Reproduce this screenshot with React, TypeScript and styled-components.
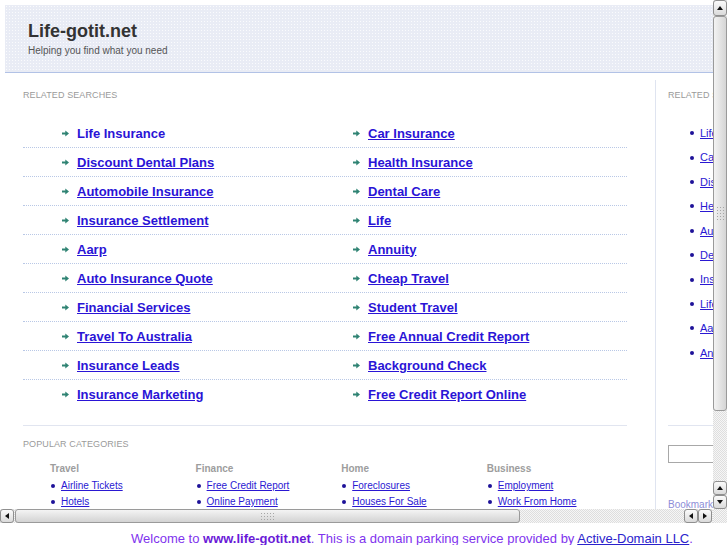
import React from 'react';
import styled, { createGlobalStyle } from 'styled-components';

const GlobalStyle = createGlobalStyle`
  body {
    margin: 0;
    background: #fff;
    font-family: "Liberation Sans", Arial, sans-serif;
  }
`;

const checker = `
  background-color: #f6f6f6;
  background-image: repeating-conic-gradient(#dedede 0 25%, #f6f6f6 0 50%);
  background-size: 2px 2px;
`;

const Frame = styled.div`
  display: grid;
  grid-template-columns: 713px 14px;
  grid-template-rows: 509px 14px;
  height: 523px;
`;

const Viewport = styled.div`
  overflow: hidden;
  padding: 5px 0 0 5px;
  box-sizing: border-box;
`;

const Page = styled.div`
  width: 900px;
`;

const Header = styled.header`
  height: 52px;
  padding: 15px 23px 0;
  border-bottom: 1px solid #b2c2e6;
  background-color: #e9ecf5;
  background-image: radial-gradient(#fafbfd 0.7px, transparent 0.8px);
  background-size: 3px 3px;
`;

const Title = styled.h1`
  margin: 0;
  font-size: 18px;
  line-height: 22px;
  font-weight: bold;
  color: #333;
`;

const Tagline = styled.div`
  margin-top: 2px;
  font-size: 10px;
  line-height: 14px;
  color: #555;
`;

const Columns = styled.div`
  display: flex;
  margin-top: 7px;
`;

const Main = styled.main`
  width: 604px;
  padding: 10px 28px 0 18px;
`;

const Sidebar = styled.aside`
  width: 200px;
  border-left: 1px solid #dfe4f0;
  padding: 10px 0 0 12px;
`;

const SectionLabel = styled.div`
  font-size: 9px;
  line-height: 11px;
  letter-spacing: 0.1px;
  text-transform: uppercase;
  color: #9a9a9a;
  white-space: nowrap;
`;

const LinkList = styled.div`
  margin-top: 18px;
`;

const LinkRow = styled.div`
  display: grid;
  grid-template-columns: 291px 1fr;
  height: 28px;
  border-bottom: 1px dotted #b9c8e6;

  &:last-child {
    border-bottom: 1px solid transparent;
  }
`;

const LinkCell = styled.div`
  display: flex;
  align-items: center;
  padding-left: 39px;
`;

const Arrow = styled.svg`
  width: 7px;
  height: 7px;
  margin-right: 8px;
  flex: none;
`;

const BigLink = styled.a<{ plain?: boolean }>`
  font-size: 13px;
  font-weight: bold;
  color: #2a14d6;
  text-decoration: ${p => (p.plain ? 'none' : 'underline')};
  white-space: nowrap;
`;

const Categories = styled.section`
  margin-top: 16px;
  border-top: 1px solid #e1e5f0;
  padding-top: 13px;
`;

const CategoryGrid = styled.div`
  display: grid;
  grid-template-columns: repeat(4, 145.6px);
  margin-top: 12px;
  padding-left: 27px;
`;

const CategoryTitle = styled.div`
  font-size: 10px;
  line-height: 14px;
  font-weight: bold;
  color: #9d9d9d;
`;

const SmallList = styled.ul<{ row: number }>`
  list-style: none;
  margin: ${p => (p.row === 16 ? '2px 0 0' : '20px 0 0')};
  padding: 0;

  li {
    display: flex;
    align-items: center;
    line-height: ${p => p.row}px;
    padding-left: ${p => (p.row === 16 ? 1 : 22)}px;
  }
`;

const Dot = styled.span<{ gap: number }>`
  width: 4px;
  height: 4px;
  border-radius: 50%;
  background: #1e1299;
  margin-right: ${p => p.gap}px;
  flex: none;
`;

const SmallLink = styled.a<{ size: number }>`
  font-size: ${p => p.size}px;
  color: #2a18d2;
  text-decoration: underline;
  white-space: nowrap;
`;

const SideRule = styled.div`
  margin-top: 60px;
  border-top: 1px solid #e1e5f0;
  width: 170px;
`;

const SearchBox = styled.input`
  display: block;
  margin-top: 19px;
  width: 150px;
  height: 18px;
  box-sizing: border-box;
  border: 1px solid #a8a8a8;
  padding: 0;
`;

const Bookmark = styled.div`
  margin-top: 36px;
  font-size: 10px;
  line-height: 12px;
  color: #8d8dd8;
`;

/* fake scrollbars */

const VBar = styled.div`
  display: flex;
  flex-direction: column;
  ${checker}
`;

const HBar = styled.div`
  display: flex;
  ${checker}
`;

const Corner = styled.div`
  ${checker}
`;

const ScrollButton = styled.div<{ long?: boolean }>`
  box-sizing: border-box;
  width: 14px;
  height: ${p => (p.long ? '16px' : '14px')};
  flex: none;
  display: flex;
  align-items: center;
  justify-content: center;
  border: 1px solid #8f8f8f;
  border-radius: 3px;
  background: linear-gradient(#fbfbfb, #dadada);
`;

const VThumb = styled.div`
  height: 395px;
  flex: none;
  box-sizing: border-box;
  border: 1px solid #9a9a9a;
  border-radius: 3px;
  background: linear-gradient(to right, #f3f3f3, #d5d5d5);
  display: flex;
  align-items: center;
  justify-content: center;
`;

const HThumb = styled.div`
  width: 505px;
  margin-left: 1px;
  flex: none;
  box-sizing: border-box;
  border: 1px solid #9a9a9a;
  border-radius: 3px;
  background: linear-gradient(#f4f4f4, #d3d3d3);
  display: flex;
  align-items: center;
  justify-content: center;
`;

const Grip = styled.div<{ w: number; h: number }>`
  width: ${p => p.w}px;
  height: ${p => p.h}px;
  background-image: radial-gradient(#a6a6a6 0.6px, transparent 0.8px);
  background-size: 3px 3px;
`;

const Spacer = styled.div<{ fixed?: number }>`
  flex: ${p => (p.fixed ? `none` : 1)};
  width: ${p => (p.fixed ? `${p.fixed}px` : 'auto')};
`;

const Footer = styled.div`
  padding: 8px 0 0 131px;
  font-size: 13px;
  line-height: 15px;
  color: #8033ee;
  white-space: nowrap;

  b {
    color: #6a1ad8;
  }

  a {
    color: #2a22cc;
    text-decoration: underline;
  }
`;

const pairs: [string, string][] = [
  ['Life Insurance', 'Car Insurance'],
  ['Discount Dental Plans', 'Health Insurance'],
  ['Automobile Insurance', 'Dental Care'],
  ['Insurance Settlement', 'Life'],
  ['Aarp', 'Annuity'],
  ['Auto Insurance Quote', 'Cheap Travel'],
  ['Financial Services', 'Student Travel'],
  ['Travel To Australia', 'Free Annual Credit Report'],
  ['Insurance Leads', 'Background Check'],
  ['Insurance Marketing', 'Free Credit Report Online'],
];

const sideLinks = [
  'Life Insurance',
  'Car Insurance',
  'Discount Dental Plans',
  'Health Insurance',
  'Automobile Insurance',
  'Dental Care',
  'Insurance Settlement',
  'Life',
  'Aarp',
  'Annuity',
];

const categories = [
  { title: 'Travel', items: ['Airline Tickets', 'Hotels'] },
  { title: 'Finance', items: ['Free Credit Report', 'Online Payment'] },
  { title: 'Home', items: ['Foreclosures', 'Houses For Sale'] },
  { title: 'Business', items: ['Employment', 'Work From Home'] },
];

const GoArrow = () => (
  <Arrow viewBox="0 0 7 7">
    <path d="M0 2.6h3.3V0.6L7 3.5 3.3 6.4V4.4H0z" fill="#2f8373" />
  </Arrow>
);

const Tri = ({ dir }: { dir: 'up' | 'down' | 'left' | 'right' }) => {
  const d = {
    up: 'M1 6L4 2 7 6z',
    down: 'M1 2L4 6 7 2z',
    left: 'M6 1L2 4 6 7z',
    right: 'M2 1L6 4 2 7z',
  }[dir];
  return (
    <svg width="8" height="8" viewBox="0 0 8 8">
      <path d={d} fill="#111" />
    </svg>
  );
};

const Cell = ({ label, plain }: { label: string; plain?: boolean }) => (
  <LinkCell>
    <GoArrow />
    <BigLink href="#" plain={plain}>{label}</BigLink>
  </LinkCell>
);

export default function App() {
  return (
    <>
      <GlobalStyle />
      <Frame>
        <Viewport>
          <Page>
            <Header>
              <Title>Life-gotit.net</Title>
              <Tagline>Helping you find what you need</Tagline>
            </Header>
            <Columns>
              <Main>
                <SectionLabel>Related Searches</SectionLabel>
                <LinkList>
                  {pairs.map(([a, b], i) => (
                    <LinkRow key={a}>
                      <Cell label={a} plain={i === 0} />
                      <Cell label={b} />
                    </LinkRow>
                  ))}
                </LinkList>
                <Categories>
                  <SectionLabel>Popular Categories</SectionLabel>
                  <CategoryGrid>
                    {categories.map(c => (
                      <div key={c.title}>
                        <CategoryTitle>{c.title}</CategoryTitle>
                        <SmallList row={16}>
                          {c.items.map(it => (
                            <li key={it}>
                              <Dot gap={6} />
                              <SmallLink href="#" size={10}>{it}</SmallLink>
                            </li>
                          ))}
                        </SmallList>
                      </div>
                    ))}
                  </CategoryGrid>
                </Categories>
              </Main>
              <Sidebar>
                <SectionLabel>Related Searches</SectionLabel>
                <SmallList row={24.4}>
                  {sideLinks.map(s => (
                    <li key={s}>
                      <Dot gap={6} />
                      <SmallLink href="#" size={11}>{s}</SmallLink>
                    </li>
                  ))}
                </SmallList>
                <SideRule />
                <SearchBox />
                <Bookmark>Bookmark this page</Bookmark>
              </Sidebar>
            </Columns>
          </Page>
        </Viewport>
        <VBar>
          <ScrollButton long>
            <Tri dir="up" />
          </ScrollButton>
          <VThumb>
            <Grip w={9} h={15} />
          </VThumb>
          <Spacer />
          <ScrollButton>
            <Tri dir="up" />
          </ScrollButton>
          <ScrollButton>
            <Tri dir="down" />
          </ScrollButton>
        </VBar>
        <HBar>
          <ScrollButton>
            <Tri dir="left" />
          </ScrollButton>
          <HThumb>
            <Grip w={15} h={9} />
          </HThumb>
          <Spacer />
          <ScrollButton>
            <Tri dir="left" />
          </ScrollButton>
          <ScrollButton>
            <Tri dir="right" />
          </ScrollButton>
          <Spacer fixed={1} />
        </HBar>
        <Corner />
      </Frame>
      <Footer>
        Welcome to <b>www.life-gotit.net</b>. This is a domain parking service provided by{' '}
        <a href="#">Active-Domain LLC</a>.
      </Footer>
    </>
  );
}
